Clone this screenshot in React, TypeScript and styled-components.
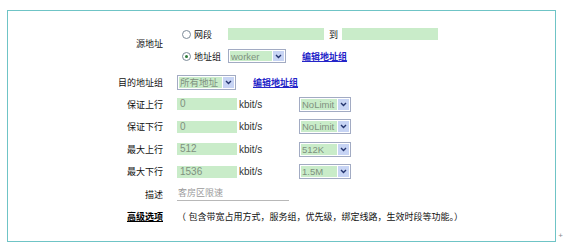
import React from 'react';
import styled, { createGlobalStyle } from 'styled-components';

const GlobalStyle = createGlobalStyle`
    body {
        margin: 0;
        background: #fff;
        font-family: "Liberation Sans", "Noto Sans CJK SC", sans-serif;
    }
`

const Page = styled.div`
    display: flex;
    align-items: flex-end;
    width: 563px;
    height: 242px;
`

const Panel = styled.div`
    box-sizing: border-box;
    margin: 5px 0 0 7px;
    width: 550px;
    height: 232px;
    border: 1px solid #6fc4c6;
    padding-top: 12px;
`

const Corner = styled.span`
    margin: 0 0 2px 2px;
    font-size: 8px;
    line-height: 8px;
    color: #8a8a8a;
`

const Row = styled.div<{ $h: number; $mt?: number }>`
    display: grid;
    grid-template-columns: 155px 1fr;
    column-gap: 14px;
    align-items: center;
    height: ${p => p.$h}px;
    margin-top: ${p => p.$mt || 0}px;
`

const Label = styled.div<{ $lift?: number }>`
    text-align: right;
    font-size: 9px;
    color: #111;
    padding-bottom: ${p => p.$lift || 0}px;
`

const Advanced = styled(Label)`
    font-weight: bold;
    text-decoration: underline;
    color: #000;
`

const Lines = styled.div`
    display: flex;
    flex-direction: column;
`

const Line = styled.div`
    display: flex;
    align-items: center;
    height: 22px;
`

const Field = styled.div`
    display: flex;
    align-items: center;
`

const Option = styled.label`
    display: flex;
    align-items: center;
    width: 51px;
    font-size: 9px;
    color: #111;
`

const Radio = styled.span<{ $on?: boolean }>`
    box-sizing: border-box;
    display: inline-flex;
    align-items: center;
    justify-content: center;
    width: 9px;
    height: 9px;
    margin: 0 3px 0 5px;
    border: 1px solid #7d8b99;
    border-radius: 50%;
    background: #fff;

    &::after {
        content: '';
        width: 3px;
        height: 3px;
        border-radius: 50%;
        background: ${p => (p.$on ? '#2c7a38' : 'transparent')};
    }
`

const TextBox = styled.div<{ $w: number; $h?: number; $ml?: number }>`
    box-sizing: border-box;
    width: ${p => p.$w}px;
    height: ${p => p.$h || 12}px;
    margin-left: ${p => p.$ml || 0}px;
    padding-left: 3px;
    background: #c9ecc9;
    color: #7f917f;
    font-size: 10px;
    line-height: ${p => p.$h || 12}px;
`

const To = styled.span`
    margin-left: 5px;
    font-size: 9px;
    color: #111;
`

const SelectBox = styled.div<{ $w: number; $h?: number; $ml?: number }>`
    box-sizing: border-box;
    display: flex;
    width: ${p => p.$w}px;
    height: ${p => p.$h || 15}px;
    margin-left: ${p => p.$ml || 0}px;
    padding: 1px;
    border: 1px solid #a2abc3;
    background: #fff;
`

const SelectText = styled.div`
    flex: 1;
    padding-left: 1px;
    background: #c9ecc9;
    color: #7f917f;
    font-size: 9.5px;
    line-height: 11px;
    overflow: hidden;
    white-space: nowrap;
`

const SelectArrow = styled.div`
    display: flex;
    align-items: center;
    justify-content: center;
    width: 11px;
    margin-left: 1px;
    background: #c7d4f4;
`

const EditLink = styled.a<{ $ml: number }>`
    margin-left: ${p => p.$ml}px;
    font-size: 9px;
    font-weight: bold;
    color: #2424c8;
    text-decoration: underline;
`

const Unit = styled.span`
    width: 60px;
    margin-left: 2px;
    font-size: 10px;
    color: #333;
`

const Memo = styled.div`
    box-sizing: border-box;
    width: 112px;
    height: 14px;
    padding-left: 1px;
    border-bottom: 1px solid #b8b8b8;
    color: #9a9a9a;
    font-size: 9px;
    line-height: 13px;
`

const Note = styled.span`
    font-size: 9px;
    color: #111;
    white-space: nowrap;
`

function Select({ value, w, h, ml }: { value: string; w: number; h?: number; ml?: number }) {
    return (
        <SelectBox $w={w} $h={h} $ml={ml}>
            <SelectText>{value}</SelectText>
            <SelectArrow>
                <svg width="7" height="5" viewBox="0 0 7 5">
                    <path d="M1 1 L3.5 3.5 L6 1" fill="none" stroke="#24356f" strokeWidth="1.4" />
                </svg>
            </SelectArrow>
        </SelectBox>
    );
}

const limits = [
    { label: '保证上行', value: '0', pick: 'NoLimit' },
    { label: '保证下行', value: '0', pick: 'NoLimit' },
    { label: '最大上行', value: '512', pick: '512K' },
    { label: '最大下行', value: '1536', pick: '1.5M' },
];

export default function App() {
    return (
        <Page>
            <GlobalStyle />
            <Panel>
                <Row $h={44}>
                    <Label $lift={4}>源地址</Label>
                    <Lines>
                        <Line>
                            <Option><Radio />网段</Option>
                            <TextBox $w={96} $h={12} />
                            <To>到</To>
                            <TextBox $w={96} $h={12} $ml={4} />
                        </Line>
                        <Line>
                            <Option><Radio $on />地址组</Option>
                            <Select value="worker" w={58} h={14} />
                            <EditLink $ml={16}>编辑地址组</EditLink>
                        </Line>
                    </Lines>
                </Row>
                <Row $h={22} $mt={4}>
                    <Label>目的地址组</Label>
                    <Field>
                        <Select value="所有地址" w={59} />
                        <EditLink $ml={17}>编辑地址组</EditLink>
                    </Field>
                </Row>
                {limits.map(item => (
                    <Row $h={22.5} key={item.label}>
                        <Label>{item.label}</Label>
                        <Field>
                            <TextBox $w={60}>{item.value}</TextBox>
                            <Unit>kbit/s</Unit>
                            <Select value={item.pick} w={52} />
                        </Field>
                    </Row>
                ))}
                <Row $h={22.5}>
                    <Label>描述</Label>
                    <Field>
                        <Memo>客房区限速</Memo>
                    </Field>
                </Row>
                <Row $h={22.5}>
                    <Advanced>高级选项</Advanced>
                    <Field>
                        <Note>（ 包含带宽占用方式，服务组，优先级，绑定线路，生效时段等功能。）</Note>
                    </Field>
                </Row>
            </Panel>
            <Corner>+</Corner>
        </Page>
    );
}
